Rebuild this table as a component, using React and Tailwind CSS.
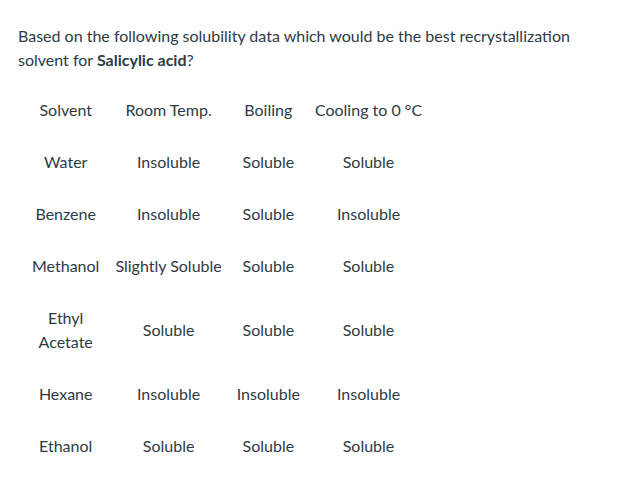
import React from "react";

const rows = [
  ["Water", "Insoluble", "Soluble", "Soluble"],
  ["Benzene", "Insoluble", "Soluble", "Insoluble"],
  ["Methanol", "Slightly Soluble", "Soluble", "Soluble"],
  ["Ethyl Acetate", "Soluble", "Soluble", "Soluble"],
  ["Hexane", "Insoluble", "Insoluble", "Insoluble"],
  ["Ethanol", "Soluble", "Soluble", "Soluble"],
];

const App = () => {
  return (
    <div
      className="bg-white min-h-[484px] pt-6 pl-[18px] text-base leading-6 text-[#2d3b45]"
      style={{ fontFamily: "Lato, 'Open Sans', sans-serif" }}
    >
      <p>
        Based on the following solubility data which would be the best recrystallization
        <br />
        solvent for <strong>Salicylic acid</strong>?
      </p>

      <table className="mt-3 ml-1.5 border-collapse text-center">
        <thead>
          <tr>
            <th className="w-[83px] px-2 py-3.5 font-normal">Solvent</th>
            <th className="px-2 py-3.5 font-normal">Room Temp.</th>
            <th className="px-[7px] py-3.5 font-normal">Boiling</th>
            <th className="px-2 py-3.5 font-normal">Cooling to 0 °C</th>
          </tr>
        </thead>
        <tbody>
          {rows.map((row) => (
            <tr key={row[0]}>
              {row.map((cell, i) => (
                <td key={i} className={i === 2 ? "px-[7px] py-3.5" : "px-2 py-3.5"}>
                  {cell}
                </td>
              ))}
            </tr>
          ))}
        </tbody>
      </table>
    </div>
  );
};

export default App;
